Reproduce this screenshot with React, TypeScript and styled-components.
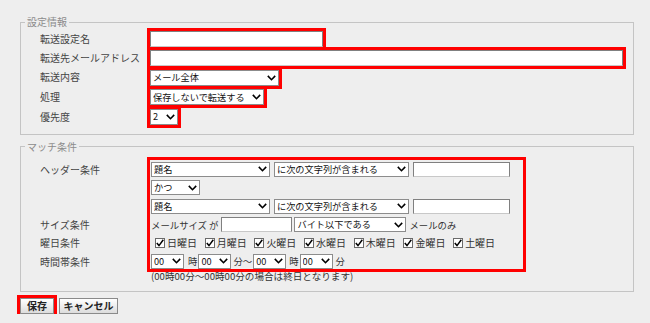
import React from 'react';
import styled, { createGlobalStyle } from 'styled-components';

const GlobalStyle = createGlobalStyle`
  html, body {
    margin: 0;
    padding: 0;
    background: #eeeeee;
  }
  body {
    font-family: "Noto Sans CJK JP", "Noto Sans", sans-serif;
    font-size: 10px;
    color: #3a3a3a;
  }
`;

const Page = styled.div`
  width: 614px;
  padding: 16px 0 0 20px;
`;

const Group = styled.fieldset<{ $pb: number }>`
  margin: 0;
  padding: 3px 0 ${(p) => p.$pb}px 0;
  border: 1px solid #c4c4c4;
  min-width: 0;
  & + & {
    margin-top: 6px;
  }
`;

const Legend = styled.legend`
  margin-left: 4px;
  padding: 0 2px;
  font-size: 10px;
  line-height: 12px;
  color: #8c8c8c;
`;

const FormGrid = styled.div`
  display: grid;
  grid-template-columns: 110px 1fr;
  row-gap: 3px;
  padding-left: 19px;
  align-items: center;
`;

const Label = styled.div`
  line-height: 16px;
  white-space: nowrap;
  color: #444;
`;

const Highlight = `outline: 3px solid #ff0000;`;

const TextBox = styled.input<{ $w: number; $h?: number; $hl?: boolean }>`
  box-sizing: border-box;
  width: ${(p) => p.$w}px;
  height: ${(p) => p.$h ?? 16}px;
  margin: 0;
  padding: 0 2px;
  border: 1px solid;
  border-color: #808080 #808080 #c8c8c8 #808080;
  background: #fff;
  font: inherit;
  ${(p) => (p.$hl ? Highlight : '')}
`;

const SelectWrap = styled.span<{ $w: number; $h?: number; $hl?: boolean }>`
  position: relative;
  display: inline-flex;
  flex: none;
  width: ${(p) => p.$w}px;
  height: ${(p) => p.$h ?? 16}px;
  ${(p) => (p.$hl ? Highlight : '')}

  select {
    appearance: none;
    -webkit-appearance: none;
    box-sizing: border-box;
    width: 100%;
    height: 100%;
    margin: 0;
    padding: 0 12px 0 2px;
    border: 1px solid #8c8c8c;
    border-radius: 0;
    background: #fff;
    color: #111;
    font-family: inherit;
    font-size: 9.2px;
    line-height: 1;
  }

  svg {
    position: absolute;
    right: 3px;
    top: 50%;
    margin-top: -3px;
    pointer-events: none;
  }
`;

const Chevron = () => (
  <svg width="9" height="6" viewBox="0 0 9 6">
    <polyline points="0.8,0.9 4.5,4.7 8.2,0.9" fill="none" stroke="#000" strokeWidth="1.6" />
  </svg>
);

type SelectProps = { w: number; h?: number; value: string; hl?: boolean };

const Select = ({ w, h, value, hl }: SelectProps) => (
  <SelectWrap $w={w} $h={h} $hl={hl}>
    <select defaultValue={value}>
      <option>{value}</option>
    </select>
    <Chevron />
  </SelectWrap>
);

const MatchGrid = styled.div`
  display: grid;
  grid-template-columns: 110px auto 1fr;
  padding: 4px 0 0 19px;
`;

const LabelStack = styled.div`
  display: flex;
  flex-direction: column;
  gap: 3.4px;
  padding-top: 2px;

  ${Label} {
    height: 15px;
    line-height: 15px;
  }
`;

const MatchBox = styled.div`
  width: 372px;
  display: flex;
  flex-direction: column;
  gap: 3.4px;
  padding: 2px 0 0 1px;
  ${Highlight}
`;

const Row = styled.div<{ $gap?: number }>`
  display: flex;
  align-items: center;
  height: 15px;
  gap: ${(p) => p.$gap ?? 4}px;
  white-space: nowrap;
  color: #333;
`;

const Text = styled.span<{ $ml?: number; $mr?: number }>`
  margin-left: ${(p) => p.$ml ?? 0}px;
  margin-right: ${(p) => p.$mr ?? 0}px;
  font-size: 9.4px;
  color: #333;
`;

const DayList = styled.div`
  display: flex;
  align-items: center;
  height: 15px;
  padding-left: 4px;
`;

const Day = styled.label`
  display: inline-flex;
  align-items: center;
  gap: 2px;
  width: 49.7px;
  color: #333;
`;

const CheckBox = styled.span`
  box-sizing: border-box;
  display: inline-flex;
  align-items: center;
  justify-content: center;
  width: 10px;
  height: 10px;
  border: 1px solid #6a6a6a;
  background: #fff;
`;

const Note = styled.div`
  grid-column: 2 / 4;
  margin-top: 1px;
  padding-left: 1px;
  line-height: 12px;
  font-size: 9.6px;
  color: #333;
`;

const Buttons = styled.div`
  display: flex;
  gap: 5px;
  margin-top: 6px;
`;

const Button = styled.button<{ $w: number; $hl?: boolean }>`
  box-sizing: border-box;
  width: ${(p) => p.$w}px;
  height: 16px;
  margin: 0;
  padding: 0;
  border: 1px solid #8a8a8a;
  background: linear-gradient(#ffffff, #dcdcdc);
  font: inherit;
  font-weight: bold;
  color: #222;
  line-height: 14px;
  ${(p) => (p.$hl ? Highlight : '')}
`;

const days = ['日曜日', '月曜日', '火曜日', '水曜日', '木曜日', '金曜日', '土曜日'];

export default function App() {
  return (
    <>
      <GlobalStyle />
      <Page>
        <Group $pb={9}>
          <Legend>設定情報</Legend>
          <FormGrid>
            <Label>転送設定名</Label>
            <div>
              <TextBox $w={173} $hl />
            </div>
            <Label>転送先メールアドレス</Label>
            <div>
              <TextBox $w={473} $hl />
            </div>
            <Label>転送内容</Label>
            <div>
              <Select w={129} value="メール全体" hl />
            </div>
            <Label>処理</Label>
            <div>
              <Select w={114} value="保存しないで転送する" hl />
            </div>
            <Label>優先度</Label>
            <div>
              <Select w={28} value="2" hl />
            </div>
          </FormGrid>
        </Group>

        <Group $pb={9}>
          <Legend>マッチ条件</Legend>
          <MatchGrid>
            <LabelStack>
              <Label>ヘッダー条件</Label>
              <Label />
              <Label />
              <Label>サイズ条件</Label>
              <Label>曜日条件</Label>
              <Label>時間帯条件</Label>
            </LabelStack>
            <MatchBox>
              <Row>
                <Select w={119} h={15} value="題名" />
                <Select w={135} h={15} value="に次の文字列が含まれる" />
                <TextBox $w={97} $h={15} />
              </Row>
              <Row>
                <Select w={49} h={15} value="かつ" />
              </Row>
              <Row>
                <Select w={119} h={15} value="題名" />
                <Select w={135} h={15} value="に次の文字列が含まれる" />
                <TextBox $w={97} $h={15} />
              </Row>
              <Row $gap={2}>
                <Text $mr={1}>メールサイズ が</Text>
                <TextBox $w={71} $h={15} />
                <Select w={112} h={15} value="バイト以下である" />
                <Text $ml={1}>メールのみ</Text>
              </Row>
              <DayList>
                {days.map((d) => (
                  <Day key={d}>
                    <CheckBox>
                      <svg width="8" height="8" viewBox="0 0 8 8">
                        <polyline points="0.8,4 3,6.6 7.3,0.8" fill="none" stroke="#000" strokeWidth="1.5" />
                      </svg>
                    </CheckBox>
                    {d}
                  </Day>
                ))}
              </DayList>
              <Row $gap={0}>
                <Select w={33} h={15} value="00" />
                <Text $ml={4} $mr={1}>時</Text>
                <Select w={33} h={15} value="00" />
                <Text $ml={2} $mr={1}>分～</Text>
                <Select w={33} h={15} value="00" />
                <Text $ml={3} $mr={1}>時</Text>
                <Select w={33} h={15} value="00" />
                <Text $ml={3}>分</Text>
              </Row>
            </MatchBox>
            <div />
            <div />
            <Note>(00時00分～00時00分の場合は終日となります)</Note>
          </MatchGrid>
        </Group>

        <Buttons>
          <Button $w={34} $hl>保存</Button>
          <Button $w={59}>キャンセル</Button>
        </Buttons>
      </Page>
    </>
  );
}
